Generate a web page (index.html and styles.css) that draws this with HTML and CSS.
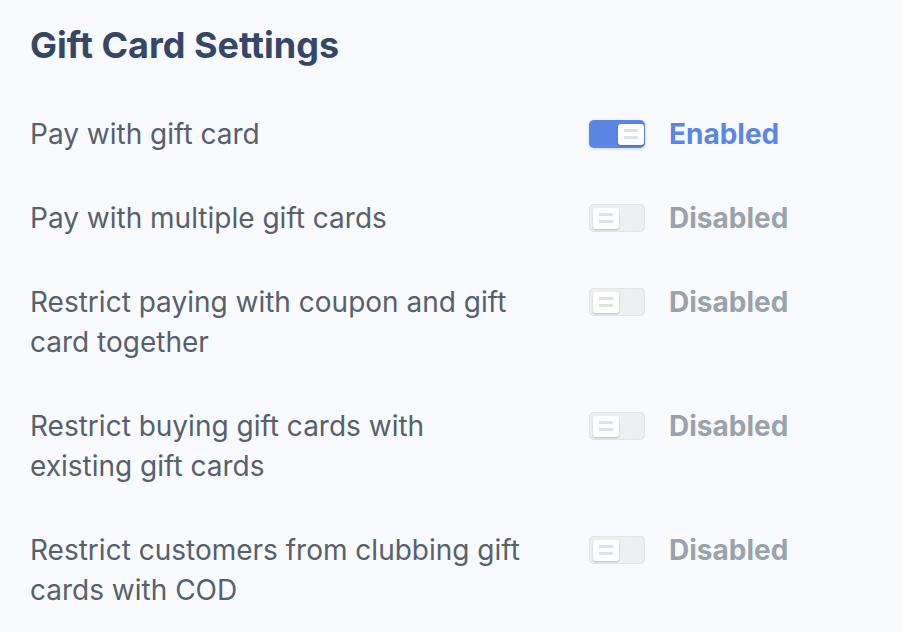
FILE: index.html
```html
<!DOCTYPE html>
<html>
<head>
<meta charset="utf-8">
<link rel="stylesheet" href="styles.css">
</head>
<body>
<div class="page">
  <h1 class="title">Gift Card Settings</h1>
  <div class="list">
    <div class="row">
      <div class="label">Pay with gift card</div>
      <div class="control">
        <span class="toggle on"><span class="knob"><i></i><i></i></span></span>
        <span class="state on">Enabled</span>
      </div>
    </div>
    <div class="row">
      <div class="label">Pay with multiple gift cards</div>
      <div class="control">
        <span class="toggle"><span class="knob"><i></i><i></i></span></span>
        <span class="state">Disabled</span>
      </div>
    </div>
    <div class="row">
      <div class="label">Restrict paying with coupon and gift card together</div>
      <div class="control">
        <span class="toggle"><span class="knob"><i></i><i></i></span></span>
        <span class="state">Disabled</span>
      </div>
    </div>
    <div class="row">
      <div class="label">Restrict buying gift cards with existing gift cards</div>
      <div class="control">
        <span class="toggle"><span class="knob"><i></i><i></i></span></span>
        <span class="state">Disabled</span>
      </div>
    </div>
    <div class="row">
      <div class="label">Restrict customers from clubbing gift cards with COD</div>
      <div class="control">
        <span class="toggle"><span class="knob"><i></i><i></i></span></span>
        <span class="state">Disabled</span>
      </div>
    </div>
  </div>
</div>
</body>
</html>
```

FILE: styles.css
```css
html, body {
  margin: 0;
  padding: 0;
  background: #f9fafd;
}
body {
  font-family: Inter, "Noto Sans", sans-serif;
}
.page {
  padding: 23px 0 0 30px;
}
.title {
  margin: 0;
  font-size: 36px;
  line-height: 44px;
  font-weight: 700;
  color: #344767;
}
.list {
  margin-top: 47px;
  display: flex;
  flex-direction: column;
  gap: 44px;
}
.row {
  display: grid;
  grid-template-columns: 559px auto;
}
.label {
  width: 498px;
  font-size: 28px;
  line-height: 40px;
  color: #56616b;
}
.control {
  display: flex;
  align-items: flex-start;
  gap: 24px;
}
.toggle {
  margin-top: 6px;
  width: 56px;
  height: 28px;
  box-sizing: border-box;
  border-radius: 5px;
  background: #eeeff1;
  box-shadow: inset 0 0 2px rgba(0, 0, 0, 0.16);
  display: flex;
  align-items: center;
  padding: 0 4px;
}
.toggle.on {
  background: #5b86e5;
  justify-content: flex-end;
  padding: 0 1px;
  box-shadow: 0 1px 3px rgba(91, 134, 229, 0.3);
}
.knob {
  width: 26px;
  height: 21px;
  border-radius: 3px;
  background: #ffffff;
  box-shadow: 0 1px 2px rgba(0, 0, 0, 0.2);
  display: flex;
  flex-direction: column;
  align-items: center;
  justify-content: center;
  gap: 4px;
}
.knob i {
  display: block;
  width: 14px;
  height: 3px;
  background: #dee3e1;
}
.state {
  font-size: 28px;
  line-height: 40px;
  font-weight: 700;
  color: #9aa3ab;
}
.state.on {
  color: #5b86e5;
}
```
